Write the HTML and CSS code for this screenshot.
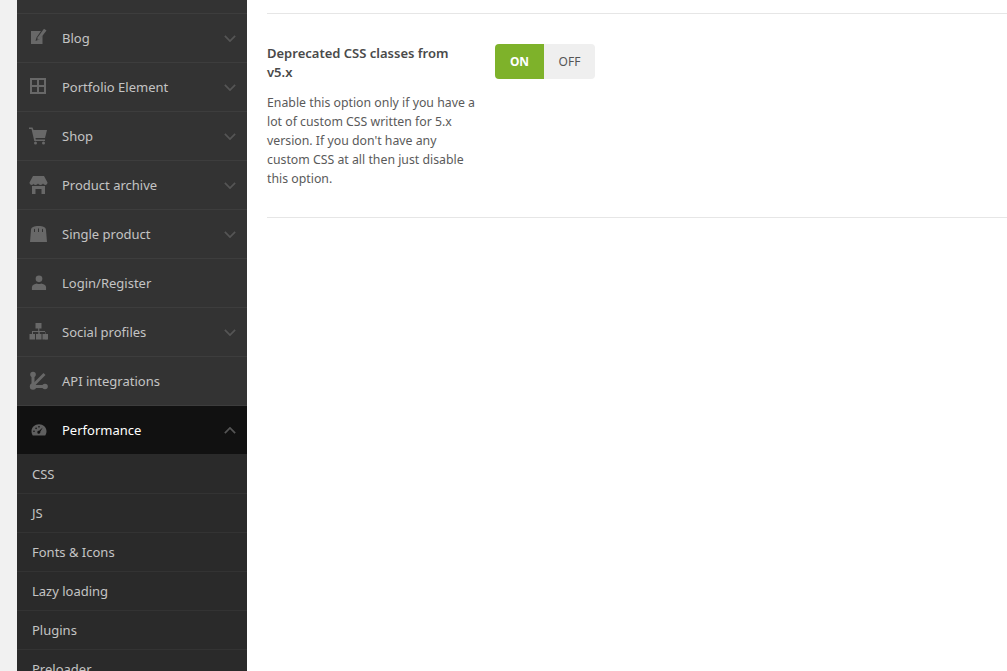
FILE: index.html
```html
<!DOCTYPE html>
<html lang="en">
<head>
    <meta charset="UTF-8">
    <title>Theme Settings</title>
    <link rel="stylesheet" href="styles.css">
</head>
<body>

    <div class="wrap">
        <div class="sidebar">
            <div class="menu-top"></div>

            <a class="menu-item">
                <svg class="menu-icon" viewBox="0 0 20 20"><path d="M2 3h10L7.500 9.500l-1 3.500L10 11.500l3.500-4V16H2z"/><path d="M8.500 9.500L15 .8l2.500 1.700L11 11l-2.500 1z"/></svg>
                <span class="menu-label">Blog</span>
                <svg class="chevron" viewBox="0 0 14 8"><path d="M1 1l6 6 6-6"/></svg>
            </a>
            <a class="menu-item">
                <svg class="menu-icon" viewBox="0 0 20 20"><path fill-rule="evenodd" d="M1 1h16v16H1zM3 3v5h5V3zm7 0v5h5V3zM3 10v5h5v-5zm7 0v5h5v-5z"/></svg>
                <span class="menu-label">Portfolio Element</span>
                <svg class="chevron" viewBox="0 0 14 8"><path d="M1 1l6 6 6-6"/></svg>
            </a>
            <a class="menu-item">
                <svg class="menu-icon" viewBox="0 0 20 20"><path d="M0 1.500h3.500l1 2.500H18l-2 8H6.500l.3 1.500H16V15H5.300L2.500 3H0z"/><circle cx="6.500" cy="17" r="1.500"/><circle cx="14.500" cy="17" r="1.500"/></svg>
                <span class="menu-label">Shop</span>
                <svg class="chevron" viewBox="0 0 14 8"><path d="M1 1l6 6 6-6"/></svg>
            </a>
            <a class="menu-item">
                <svg class="menu-icon" viewBox="0 0 20 20"><path d="M4 1h11l3.500 6.500c0 1.500-1 2.500-2.200 2.500-1 0-1.900-.5-2.300-1.400-.4.900-1.300 1.400-2.500 1.400s-2-.5-2.500-1.400c-.5.900-1.300 1.400-2.500 1.400s-2.100-.5-2.500-1.400C4.600 9.500 3.700 10 2.700 10 1.500 10 .5 9 .5 7.500z"/><path d="M3 11h13v8h-3.500v-5h-6v5H3z"/></svg>
                <span class="menu-label">Product archive</span>
                <svg class="chevron" viewBox="0 0 14 8"><path d="M1 1l6 6 6-6"/></svg>
            </a>
            <a class="menu-item">
                <svg class="menu-icon" viewBox="0 0 20 20"><path fill-rule="evenodd" d="M1 18l1-12c.2-3 3-4 7.500-4s7.300 1 7.500 4l1 12zM5 8h1V5.500C6 4.500 5 4.500 5 5.500zm4 0h1V5c0-1-1-1-1 0zm4 0h1V5.500c0-1-1-1-1 0z"/></svg>
                <span class="menu-label">Single product</span>
                <svg class="chevron" viewBox="0 0 14 8"><path d="M1 1l6 6 6-6"/></svg>
            </a>
            <a class="menu-item">
                <svg class="menu-icon" viewBox="-2 -2 24 24"><circle cx="10" cy="5" r="4"/><path d="M1.500 18.500v-3.500c0-2.500 3-4 6-4.500 1.500 1 3.500 1 5 0 3 .5 6 2 6 4.500v3.500z"/></svg>
                <span class="menu-label">Login/Register</span>
            </a>
            <a class="menu-item">
                <svg class="menu-icon" viewBox="0 0 20 20"><path d="M6.500 1h6v5.500h-2.200V9H16v3h1.500v5.500h-1V10h-5.800v2h-1.400v-2H4v2h-1V9h6.200V6.500h-2.700z"/><path d="M.5 12h5.500v5.500H.5zM7 12h5.500v5.500H7zM13.500 12H19v5.500h-5.500z"/></svg>
                <span class="menu-label">Social profiles</span>
                <svg class="chevron" viewBox="0 0 14 8"><path d="M1 1l6 6 6-6"/></svg>
            </a>
            <a class="menu-item">
                <svg class="menu-icon" viewBox="0 0 20 20"><circle cx="4" cy="3.500" r="2.800"/><circle cx="4" cy="15.500" r="3.200"/><circle cx="16" cy="15.500" r="2.800"/><path d="M2.500 4h3v10h-3zM4 14h11v3H4z"/><path d="M3 13.500L14.500 2l2 2L5 15.500z"/></svg>
                <span class="menu-label">API integrations</span>
            </a>
            <a class="menu-item menu-item-active">
                <svg class="menu-icon" viewBox="-2 -2 24 24"><path fill-rule="evenodd" d="M10 3c5 0 9 3.500 9 8.500 0 2-.6 3.500-1.500 5h-15C1.600 15 1 13.500 1 11.500 1 6.500 5 3 10 3zM14.500 7L10.200 11a1.800 1.800 0 1 0 1.300 1.200zM4 10.500a1 1 0 1 0 0 2 1 1 0 0 0 0-2zm2.500-3.500a1 1 0 1 0 0 2 1 1 0 0 0 0-2zM10 5.200a1 1 0 1 0 0 2 1 1 0 0 0 0-2z"/></svg>
                <span class="menu-label">Performance</span>
                <svg class="chevron" viewBox="0 0 14 8"><path d="M1 7l6-6 6 6"/></svg>
            </a>

            <div class="submenu">
                <a class="submenu-item">CSS</a>
                <a class="submenu-item">JS</a>
                <a class="submenu-item">Fonts &amp; Icons</a>
                <a class="submenu-item">Lazy loading</a>
                <a class="submenu-item">Plugins</a>
                <a class="submenu-item">Preloader</a>
            </div>
        </div>

        <div class="content">
            <div class="option">
                <div class="option-text">
                    <h3>Deprecated CSS classes from v5.x</h3>
                    <p>Enable this option only if you have a lot of custom CSS written for 5.x version. If you don't have any custom CSS at all then just disable this option.</p>
                </div>
                <div class="switch">
                    <span class="switch-on">ON</span>
                    <span class="switch-off">OFF</span>
                </div>
            </div>
        </div>
    </div>

</body>
</html>
```
FILE: styles.css
```css
html, body {
    height: 100%;
}
body {
    margin: 0;
    overflow: hidden;
    background-color: #f1f1f1;
    font-family: "Noto Sans", Arial, sans-serif;
}
.wrap {
    display: flex;
    height: 671px;
    padding-left: 17px;
    overflow: hidden;
}
.sidebar {
    width: 230px;
    flex-shrink: 0;
    background-color: #333;
}
.menu-top {
    height: 14px;
    border-bottom: 1px solid #3d3d3d;
    box-sizing: border-box;
}
.menu-item {
    display: flex;
    align-items: center;
    box-sizing: border-box;
    height: 49px;
    padding: 0 11px 0 12px;
    border-bottom: 1px solid #3d3d3d;
    color: #c4c4c4;
    font-size: 13px;
}
.menu-item-active {
    background-color: #111;
    border-bottom-color: #2a2a2a;
    color: #fff;
}
.menu-item-active .menu-icon {
    fill: #5f5f5f;
}
.menu-icon {
    width: 20px;
    height: 20px;
    margin-right: 13px;
    fill: #686868;
}
.menu-label {
    flex: 1;
}
.chevron {
    width: 12px;
    height: 7px;
    fill: none;
    stroke: #555;
    stroke-width: 2;
}
.submenu {
    background-color: #2a2a2a;
}
.submenu-item {
    display: flex;
    align-items: center;
    box-sizing: border-box;
    height: 39px;
    padding-left: 15px;
    border-bottom: 1px solid #333;
    color: #c4c4c4;
    font-size: 13px;
}
.content {
    flex: 1;
    padding: 13px 0 0 20px;
    background-color: #fff;
}
.option {
    display: flex;
    padding: 30px 0 30px;
    border-top: 1px solid #e6e6e6;
    border-bottom: 1px solid #e6e6e6;
    height: 143px;
}
.option-text {
    width: 208px;
    margin-right: 20px;
}
.option-text h3 {
    margin: 0 0 11px;
    color: #4a4a4a;
    font-size: 13px;
    font-weight: 600;
    line-height: 19px;
}
.option-text p {
    margin: 0;
    color: #5a5a5a;
    font-size: 12.3px;
    line-height: 19px;
}
.switch {
    display: flex;
    width: 100px;
    height: 35px;
    border-radius: 4px;
    overflow: hidden;
    font-size: 12px;
    line-height: 35px;
    text-align: center;
}
.switch-on {
    width: 49px;
    background-color: #7eb22a;
    color: #fff;
    font-weight: 700;
}
.switch-off {
    flex: 1;
    background-color: #efefef;
    color: #555;
}
```
